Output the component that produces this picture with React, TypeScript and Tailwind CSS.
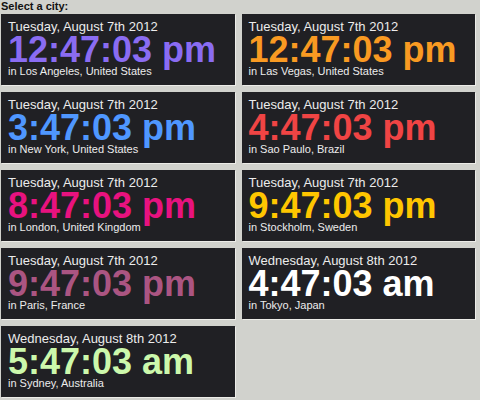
import React from "react";

type City = { date: string; time: string; place: string; color: string };

const cities: City[] = [
  { date: "Tuesday, August 7th 2012", time: "12:47:03 pm", place: "in Los Angeles, United States", color: "text-[#8a6cf2]" },
  { date: "Tuesday, August 7th 2012", time: "12:47:03 pm", place: "in Las Vegas, United States", color: "text-[#f99a22]" },
  { date: "Tuesday, August 7th 2012", time: "3:47:03 pm", place: "in New York, United States", color: "text-[#4f97ff]" },
  { date: "Tuesday, August 7th 2012", time: "4:47:03 pm", place: "in Sao Paulo, Brazil", color: "text-[#f04444]" },
  { date: "Tuesday, August 7th 2012", time: "8:47:03 pm", place: "in London, United Kingdom", color: "text-[#e8127f]" },
  { date: "Tuesday, August 7th 2012", time: "9:47:03 pm", place: "in Stockholm, Sweden", color: "text-[#ffc600]" },
  { date: "Tuesday, August 7th 2012", time: "9:47:03 pm", place: "in Paris, France", color: "text-[#ab5582]" },
  { date: "Wednesday, August 8th 2012", time: "4:47:03 am", place: "in Tokyo, Japan", color: "text-[#ffffff]" },
  { date: "Wednesday, August 8th 2012", time: "5:47:03 am", place: "in Sydney, Australia", color: "text-[#ccf8ac]" },
];

export default function App() {
  return (
    <div
      className="w-[480px] h-[400px] overflow-hidden bg-[#d1d2cd]"
      style={{ fontFamily: '"Liberation Sans", Arial, sans-serif' }}
    >
      <div className="pl-px text-[11px] leading-[13px] font-bold text-[#111]">Select a city:</div>
      <div className="mt-px pl-px w-[475px] grid grid-cols-2 gap-x-[7px] gap-y-[7px]">
        {cities.map((c, i) => (
          <div
            key={i}
            className="h-[71px] bg-[#202024] pl-[7px] pt-[5px] shadow-[1px_1px_0_#ececE8]"
          >
            <div className="text-[13px] leading-[15px] text-[#ececec]">{c.date}</div>
            <div className={`mt-px text-[36px] leading-[30px] font-bold ${c.color}`}>{c.time}</div>
            <div className="text-[11px] leading-[13px] text-[#ececec]">{c.place}</div>
          </div>
        ))}
      </div>
    </div>
  );
}
